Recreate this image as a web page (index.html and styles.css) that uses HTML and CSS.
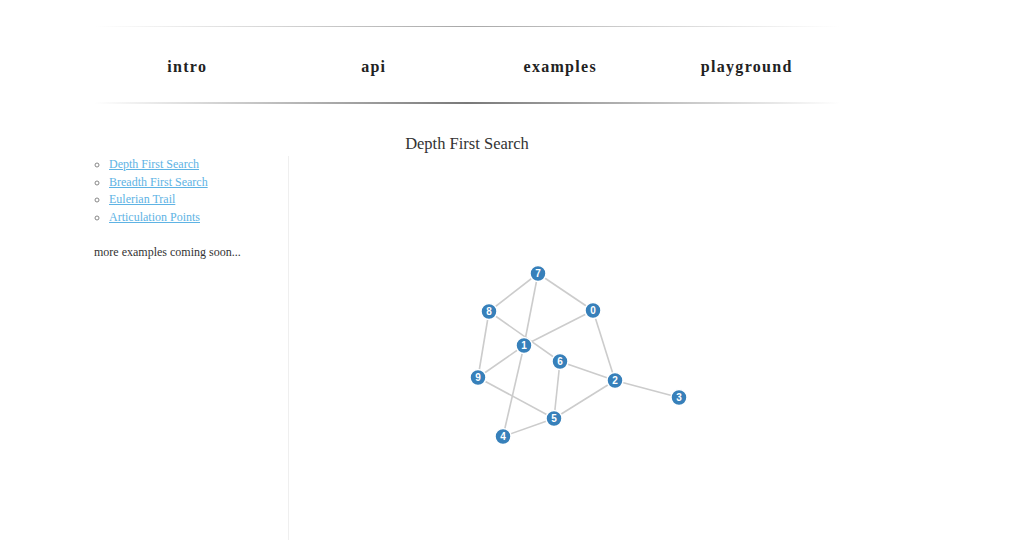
FILE: index.html
```html
<!DOCTYPE html>
<html>
<head>
<meta charset="utf-8">
<link rel="stylesheet" href="styles.css">
</head>
<body>
<div class="page">
  <nav class="nav">
    <div class="rule rule-top"></div>
    <ul class="nav-items">
      <li>intro</li>
      <li>api</li>
      <li>examples</li>
      <li>playground</li>
    </ul>
    <div class="rule rule-bottom"></div>
  </nav>
  <h1 class="title">Depth First Search</h1>
  <div class="content">
    <aside class="sidebar">
      <ul class="examples">
        <li><a href="#">Depth First Search</a></li>
        <li><a href="#">Breadth First Search</a></li>
        <li><a href="#">Eulerian Trail</a></li>
        <li><a href="#">Articulation Points</a></li>
      </ul>
      <p class="soon">more examples coming soon...</p>
    </aside>
    <main class="main">
      <svg class="graph" width="551" height="385" viewBox="0 1.5 551 385">
        <g class="edges">
          <line x1="249" y1="119" x2="200" y2="157"/>
          <line x1="249" y1="119" x2="304" y2="156"/>
          <line x1="249" y1="119" x2="235" y2="191"/>
          <line x1="235" y1="191" x2="214" y2="282"/>
          <line x1="200" y1="157" x2="189" y2="223"/>
          <line x1="200" y1="157" x2="271" y2="207"/>
          <line x1="304" y1="156" x2="235" y2="191"/>
          <line x1="304" y1="156" x2="326" y2="226"/>
          <line x1="235" y1="191" x2="189" y2="223"/>
          <line x1="271" y1="207" x2="326" y2="226"/>
          <line x1="271" y1="207" x2="265" y2="264"/>
          <line x1="189" y1="223" x2="265" y2="264"/>
          <line x1="326" y1="226" x2="265" y2="264"/>
          <line x1="326" y1="226" x2="390" y2="243"/>
          <line x1="265" y1="264" x2="214" y2="282"/>
        </g>
        <g class="nodes">
          <g transform="translate(249,119)"><circle r="8"/><text dy="3.5">7</text></g>
          <g transform="translate(200,157)"><circle r="8"/><text dy="3.5">8</text></g>
          <g transform="translate(304,156)"><circle r="8"/><text dy="3.5">0</text></g>
          <g transform="translate(235,191)"><circle r="8"/><text dy="3.5">1</text></g>
          <g transform="translate(271,207)"><circle r="8"/><text dy="3.5">6</text></g>
          <g transform="translate(189,223)"><circle r="8"/><text dy="3.5">9</text></g>
          <g transform="translate(326,226)"><circle r="8"/><text dy="3.5">2</text></g>
          <g transform="translate(390,243)"><circle r="8"/><text dy="3.5">3</text></g>
          <g transform="translate(265,264)"><circle r="8"/><text dy="3.5">5</text></g>
          <g transform="translate(214,282)"><circle r="8"/><text dy="3.5">4</text></g>
        </g>
      </svg>
    </main>
  </div>
</div>
</body>
</html>
```
FILE: styles.css
```css
html, body {
  margin: 0;
  padding: 0;
  background: #fff;
}
body {
  font-family: "Liberation Serif", "DejaVu Serif", serif;
  color: #333;
}
.page {
  width: 746px;
  margin-left: 94px;
  padding-top: 26px;
}
.nav {
  display: flex;
  flex-direction: column;
}
.rule {
  width: 100%;
}
.rule-top {
  height: 1px;
  background: linear-gradient(to right, rgba(170,170,170,0), #a8a8a8 50%, rgba(170,170,170,0));
}
.rule-bottom {
  height: 2px;
  background: linear-gradient(to right, rgba(100,100,100,0), #6a6a6a 50%, rgba(100,100,100,0));
  opacity: 0.9;
}
.nav-items {
  list-style: none;
  margin: 0;
  padding: 0;
  height: 75px;
  display: grid;
  grid-template-columns: repeat(4, 1fr);
  align-items: center;
}
.nav-items li {
  text-align: center;
  font-size: 16px;
  font-weight: bold;
  letter-spacing: 1.3px;
  color: #222;
  padding-top: 4px;
}
.title {
  margin: 0;
  padding-top: 29px;
  height: 23px;
  line-height: 22px;
  text-align: center;
  font-size: 16.5px;
  font-weight: normal;
  color: #333;
}
.content {
  display: flex;
  height: 385px;
}
.sidebar {
  width: 194px;
  flex: none;
}
.examples {
  list-style: circle;
  margin: 0;
  padding: 0 0 0 15px;
  font-size: 12px;
  line-height: 17.5px;
  color: #888;
}
.examples a {
  color: #5eb3e4;
  text-decoration: underline;
}
.soon {
  margin: 19px 0 0 0;
  font-size: 12px;
  color: #333;
}
.main {
  flex: 1;
  border-left: 1px solid #efefef;
}
.graph {
  display: block;
}
.edges line {
  stroke: #ccc;
  stroke-width: 1.6;
}
.nodes circle {
  fill: #3780ba;
  stroke: #fff;
  stroke-width: 1.5;
}
.nodes text {
  fill: #fff;
  font-family: "Liberation Sans", Arial, sans-serif;
  font-size: 10px;
  font-weight: bold;
  text-anchor: middle;
}
```
